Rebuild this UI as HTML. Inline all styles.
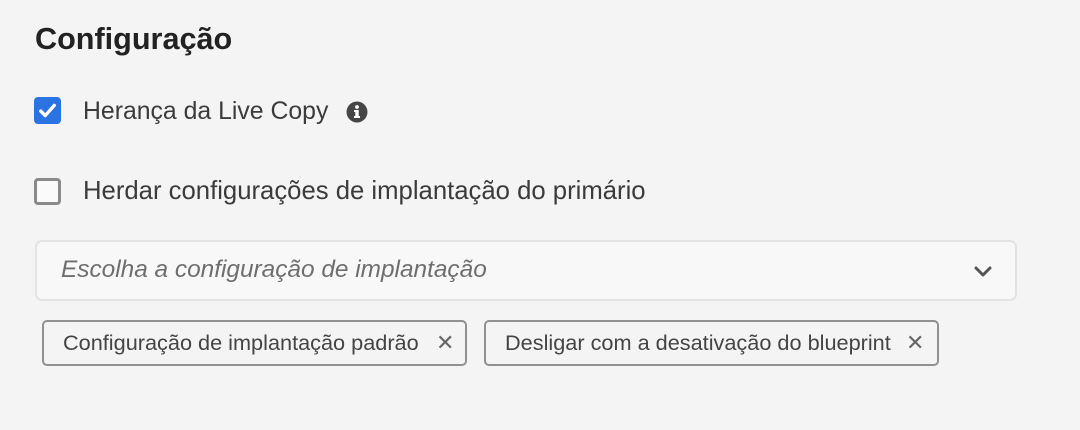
<!DOCTYPE html>
<html><head><meta charset="utf-8"><style>
body{margin:0;width:1080px;height:430px;background:#f4f4f4;font-family:"Liberation Sans",sans-serif;color:#2c2c2c;position:relative;overflow:hidden}
.a{position:absolute;white-space:nowrap}
h1{position:absolute;left:35px;top:22px;margin:0;font-size:30.6px;font-weight:bold;color:#222}
.cb{position:absolute;left:34px;width:27px;height:27px;border-radius:4px;box-sizing:border-box}
.lbl{color:#3b3b3b;left:83px}
.dd{position:absolute;left:35px;top:240px;width:982px;height:61px;box-sizing:border-box;border:2px solid #e3e3e3;border-radius:7px;background:#f8f8f8}
.tag{position:absolute;top:320px;height:46px;box-sizing:border-box;border:2px solid #919191;border-radius:5px;font-size:21.7px;color:#444;line-height:42px;padding-left:19px}
.x{position:absolute;top:0;font-size:22px;color:#666}
</style></head><body>
<h1>Configuração</h1>
<div class="cb" style="top:97px;background:#2b73e3"><svg width="27" height="27" viewBox="0 0 24 24"><path d="M6 12.5l4 4 8-9" fill="none" stroke="#fff" stroke-width="3" stroke-linecap="round" stroke-linejoin="round"/></svg></div>
<div class="a lbl" style="top:98px;font-size:24.8px">Herança da Live Copy</div>
<svg class="a" style="left:346px;top:101px" width="22" height="22" viewBox="0 0 22 22"><circle cx="11" cy="11" r="10.5" fill="#464646"/><rect x="9.3" y="9" width="3.4" height="7.5" fill="#fff"/><rect x="8" y="15" width="6" height="2" fill="#fff"/><rect x="8" y="9" width="4" height="2" fill="#fff"/><circle cx="11" cy="6" r="1.9" fill="#fff"/></svg>
<div class="cb" style="top:178px;border:3px solid #8a8a8a;background:#fafafa"></div>
<div class="a lbl" style="top:177px;font-size:25.7px">Herdar configurações de implantação do primário</div>
<div class="dd"></div>
<div class="a" style="left:61px;top:256px;font-size:24.4px;font-style:italic;color:#6e6e6e">Escolha a configuração de implantação</div>
<svg class="a" style="left:973px;top:265px" width="20" height="14" viewBox="0 0 20 14"><path d="M3 3l7 7 7-7" fill="none" stroke="#555" stroke-width="3" stroke-linecap="round" stroke-linejoin="round"/></svg>
<div class="tag" style="left:42px;width:425px">Configuração de implantação padrão<span class="x" style="left:392px">✕</span></div>
<div class="tag" style="left:484px;width:455px">Desligar com a desativação do blueprint<span class="x" style="left:420px">✕</span></div>
</body></html>
